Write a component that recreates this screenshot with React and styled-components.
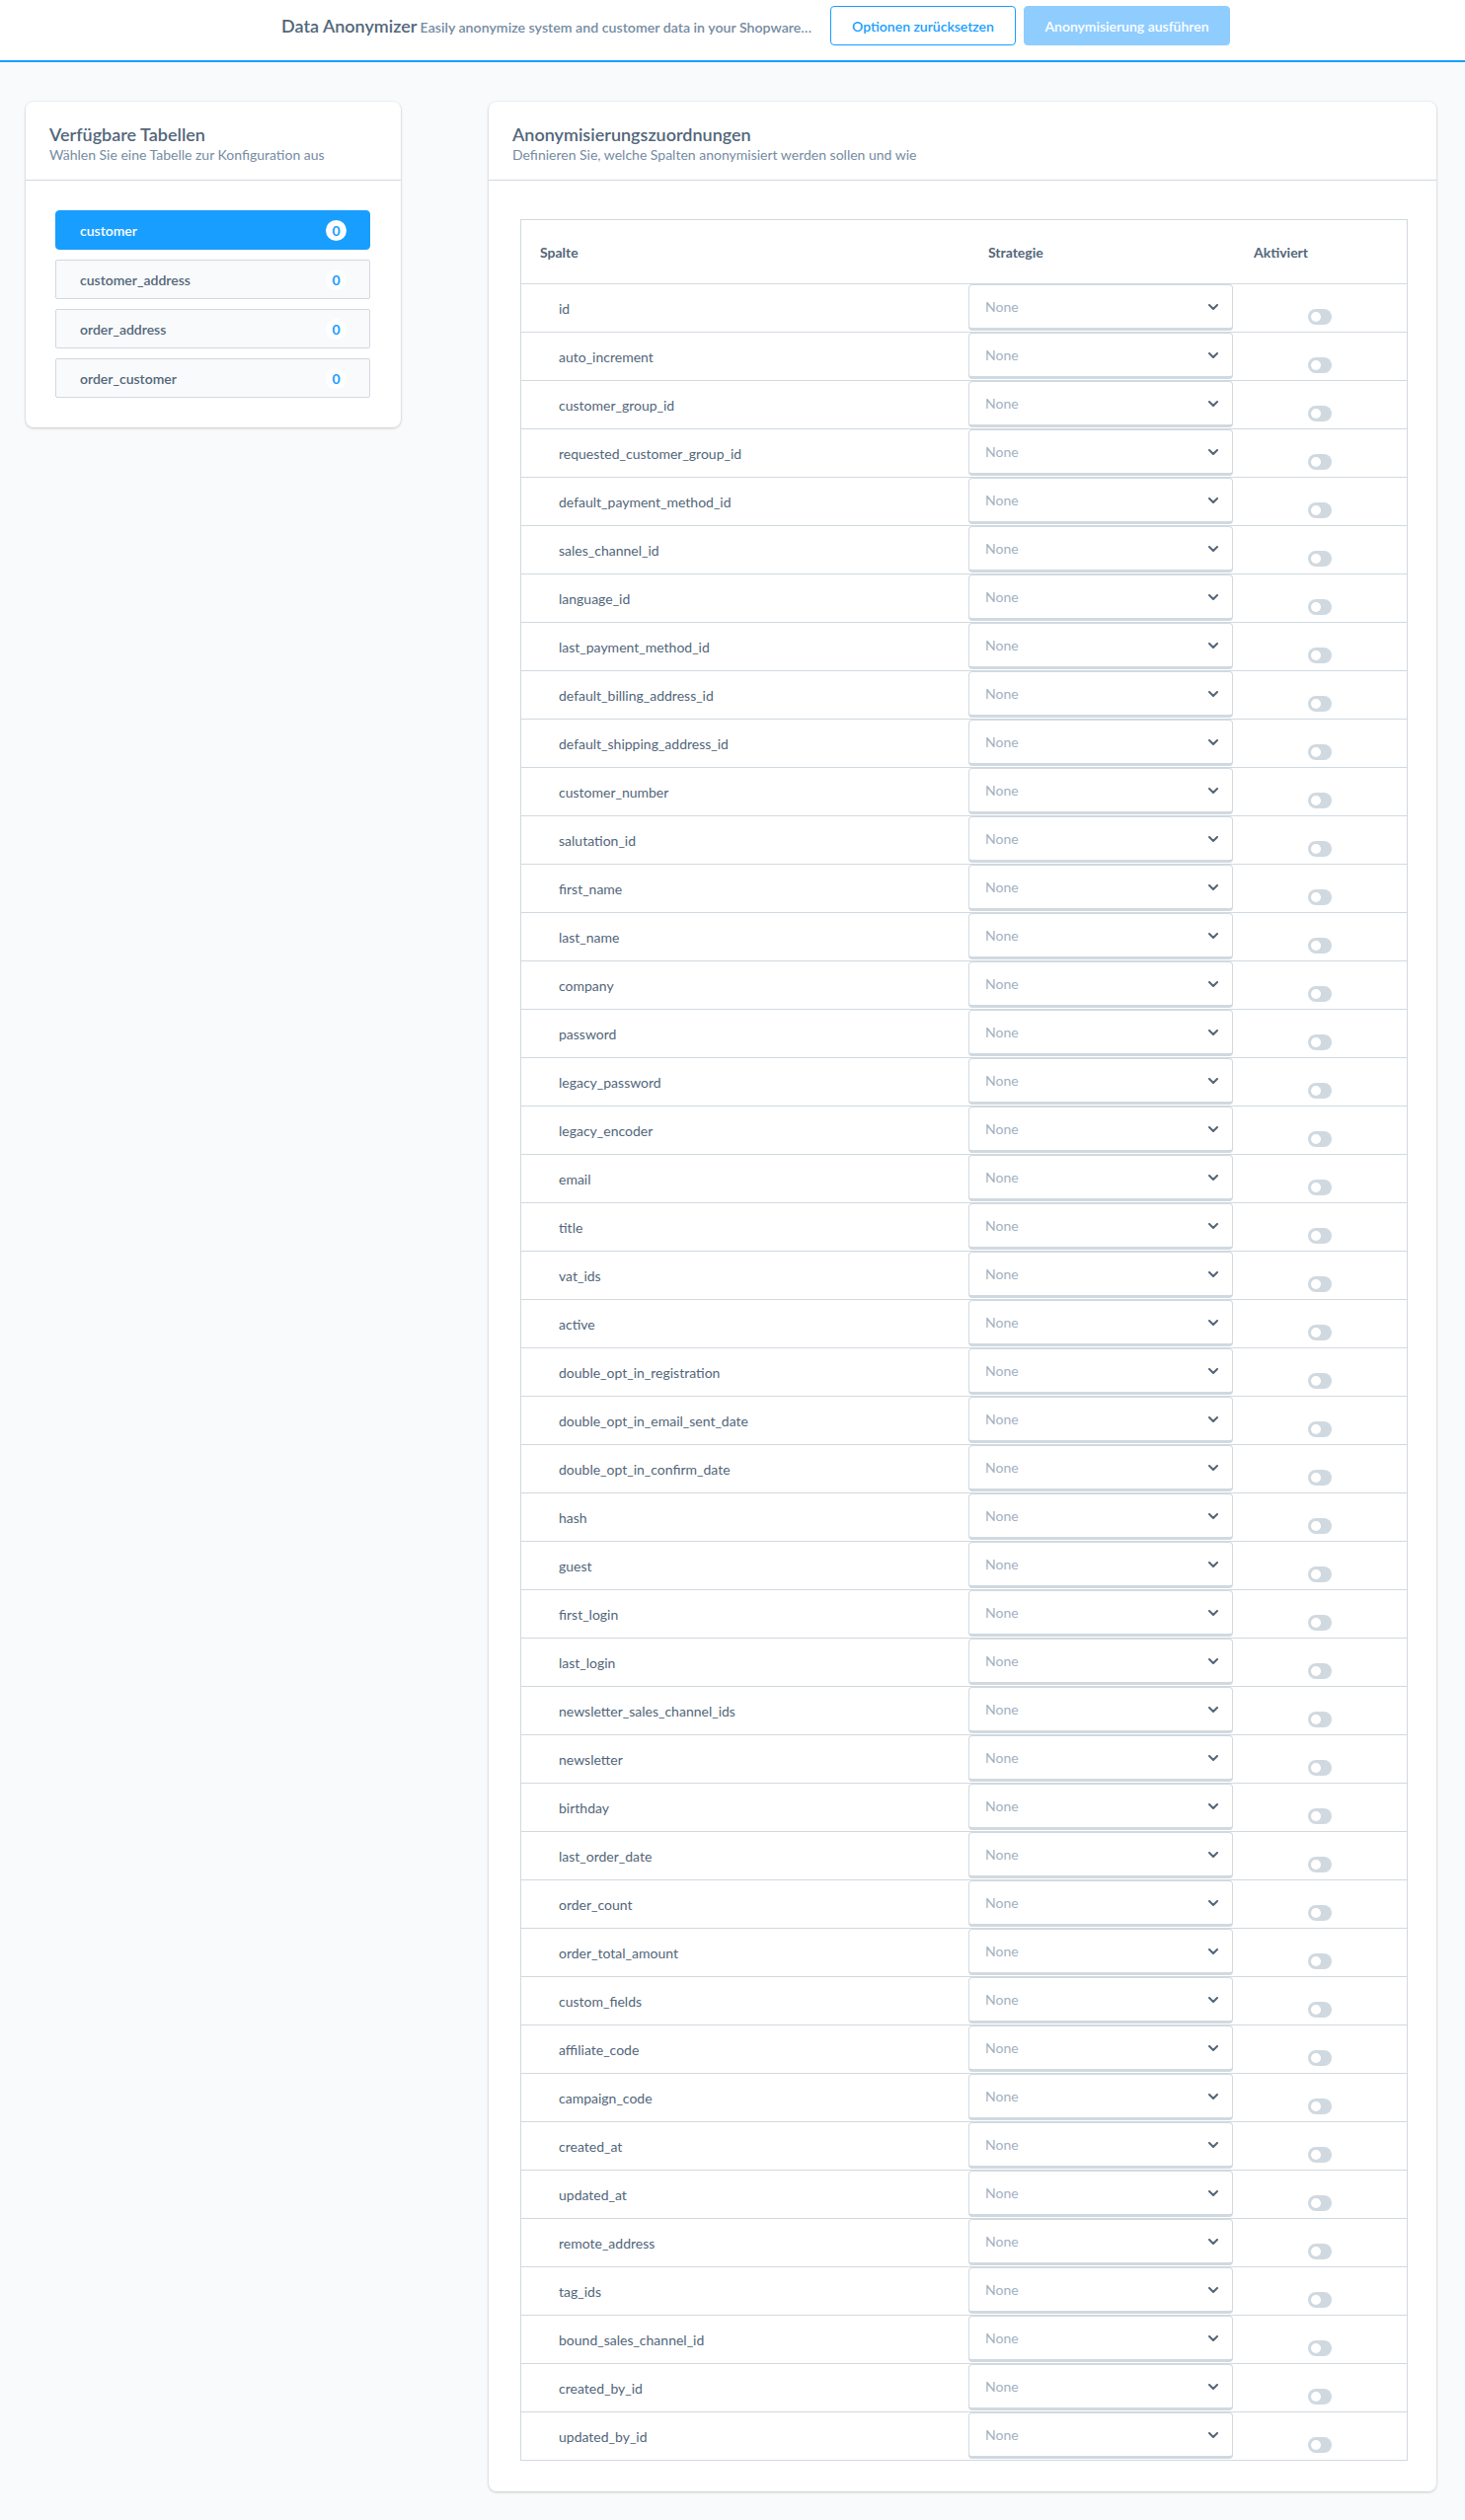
import React from "react";
import styled, { createGlobalStyle } from "styled-components";

const GlobalStyle = createGlobalStyle`
  * {
    box-sizing: border-box;
  }
  body {
    margin: 0;
    background-color: #f9fafb;
    font-family: "Source Sans Pro", Lato, "Noto Sans", sans-serif;
    color: #52667a;
  }
`;

const Page = styled.div`
  min-height: 2553px;
  background-color: #f9fafb;
`;

/* barra superior */
const HeaderBar = styled.header`
  display: flex;
  align-items: center;
  gap: 8px;
  padding: 6px 238px 15px 285px;
  background-color: #fff;
  border-bottom: 2px solid #189eff;
`;

const Heading = styled.div`
  flex: 1;
  min-width: 0;
  white-space: nowrap;
  overflow: hidden;
  text-overflow: ellipsis;
  color: #52667a;
`;

const HeadingTitle = styled.span`
  font-size: 18px;
  font-weight: 600;
`;

const HeadingSub = styled.span`
  font-size: 14.2px;
  font-weight: 600;
  color: #758ca3;
  margin-left: 3px;
`;

const Button = styled.button`
  height: 40px;
  width: ${(p) => p.$width}px;
  border-radius: 4px;
  font-family: inherit;
  font-size: 14px;
  font-weight: 600;
  cursor: pointer;
  border: 1px solid ${(p) => (p.$primary ? "#8fcdff" : "#189eff")};
  background-color: ${(p) => (p.$primary ? "#8fcdff" : "#fff")};
  color: ${(p) => (p.$primary ? "#fff" : "#189eff")};
`;

/* contenido */
const Main = styled.main`
  display: grid;
  grid-template-columns: 380px 960px;
  gap: 89px;
  align-items: start;
  padding: 40px 29px 31px 26px;
`;

const Card = styled.section`
  background-color: #fff;
  border-radius: 8px;
  box-shadow: 0 0 0 1px rgba(0, 0, 0, 0.03), 0 1px 3px rgba(0, 0, 0, 0.18);
`;

const CardHeader = styled.div`
  height: 80px;
  padding: 21px 24px 0;
  border-bottom: 1px solid #d1d9e0;
`;

const CardTitle = styled.h2`
  margin: 0;
  font-size: 18px;
  line-height: 24px;
  font-weight: 600;
  color: #52667a;
`;

const CardSubtitle = styled.p`
  margin: 0;
  font-size: 14px;
  line-height: 18px;
  color: #758ca3;
`;

const CardBody = styled.div`
  padding: ${(p) => p.$padding};
`;

const TableList = styled.div`
  display: flex;
  flex-direction: column;
  gap: 10px;
`;

const TableItem = styled.div`
  height: 40px;
  display: flex;
  align-items: center;
  justify-content: space-between;
  padding: 0 23px 0 24px;
  border: 1px solid ${(p) => (p.$active ? "#189eff" : "#d1d9e0")};
  border-radius: ${(p) => (p.$active ? "4px" : "2px")};
  background-color: ${(p) => (p.$active ? "#189eff" : "#f9fafb")};
  color: ${(p) => (p.$active ? "#fff" : "#52667a")};
  font-size: 14px;
  font-weight: 600;
  cursor: pointer;
`;

const Badge = styled.span`
  width: 21px;
  height: 21px;
  border-radius: 50%;
  background-color: #fff;
  color: #189eff;
  display: flex;
  align-items: center;
  justify-content: center;
  font-size: 14px;
  font-weight: 700;
`;

/* tabla de columnas */
const Grid = styled.div`
  border: 1px solid #d1d9e0;
`;

const Row = styled.div`
  display: grid;
  grid-template-columns: 453px 268px 1fr;
  height: ${(p) => (p.$head ? 65 : 49)}px;
  border-bottom: 1px solid #d1d9e0;

  &:last-child {
    border-bottom: none;
    height: 48px;
  }
`;

const HeadCell = styled.div`
  display: flex;
  align-items: center;
  padding-left: ${(p) => p.$pad}px;
  font-size: 14px;
  font-weight: 700;
  color: #52667a;
`;

const NameCell = styled.div`
  display: flex;
  align-items: center;
  padding-left: 38px;
  font-size: 14px;
  color: #52667a;
`;

const SelectBox = styled.div`
  height: 47px;
  display: flex;
  align-items: center;
  justify-content: space-between;
  padding: 0 14px 0 16px;
  border: 1px solid #d1d9e0;
  border-bottom-width: 3px;
  border-radius: 4px;
  background-color: #fff;
  color: #a3b1bf;
  font-size: 14px;
  cursor: pointer;
`;

const ToggleCell = styled.div`
  display: flex;
  justify-content: center;
  align-items: flex-start;
  padding-top: 25px;
`;

const Toggle = styled.span`
  position: relative;
  width: 24px;
  height: 16px;
  border-radius: 8px;
  background-color: #d1d9e0;

  &::after {
    content: "";
    position: absolute;
    left: 3px;
    top: 3px;
    width: 10px;
    height: 10px;
    border-radius: 50%;
    background-color: #fff;
  }
`;

const Chevron = () => (
  <svg width="10" height="6" viewBox="0 0 10 6" fill="none">
    <path d="M1 1l4 4 4-4" stroke="#52667a" strokeWidth="2" strokeLinecap="round" strokeLinejoin="round" />
  </svg>
);

const tablas = ["customer", "customer_address", "order_address", "order_customer"];

const columnas = [
  "id",
  "auto_increment",
  "customer_group_id",
  "requested_customer_group_id",
  "default_payment_method_id",
  "sales_channel_id",
  "language_id",
  "last_payment_method_id",
  "default_billing_address_id",
  "default_shipping_address_id",
  "customer_number",
  "salutation_id",
  "first_name",
  "last_name",
  "company",
  "password",
  "legacy_password",
  "legacy_encoder",
  "email",
  "title",
  "vat_ids",
  "active",
  "double_opt_in_registration",
  "double_opt_in_email_sent_date",
  "double_opt_in_confirm_date",
  "hash",
  "guest",
  "first_login",
  "last_login",
  "newsletter_sales_channel_ids",
  "newsletter",
  "birthday",
  "last_order_date",
  "order_count",
  "order_total_amount",
  "custom_fields",
  "affiliate_code",
  "campaign_code",
  "created_at",
  "updated_at",
  "remote_address",
  "tag_ids",
  "bound_sales_channel_id",
  "created_by_id",
  "updated_by_id",
];

const App = () => {
  return (
    <Page>
      <GlobalStyle />
      <HeaderBar>
        <Heading>
          <HeadingTitle>Data Anonymizer</HeadingTitle>
          <HeadingSub>Easily anonymize system and customer data in your Shopware…</HeadingSub>
        </Heading>
        <Button $width={188}>Optionen zurücksetzen</Button>
        <Button $primary $width={209}>Anonymisierung ausführen</Button>
      </HeaderBar>

      <Main>
        <Card>
          <CardHeader>
            <CardTitle>Verfügbare Tabellen</CardTitle>
            <CardSubtitle>Wählen Sie eine Tabelle zur Konfiguration aus</CardSubtitle>
          </CardHeader>
          <CardBody $padding="30px 31px 30px 30px">
            <TableList>
              {tablas.map((t, i) => (
                <TableItem key={t} $active={i === 0}>
                  {t}
                  <Badge>0</Badge>
                </TableItem>
              ))}
            </TableList>
          </CardBody>
        </Card>

        <Card>
          <CardHeader>
            <CardTitle>Anonymisierungszuordnungen</CardTitle>
            <CardSubtitle>Definieren Sie, welche Spalten anonymisiert werden sollen und wie</CardSubtitle>
          </CardHeader>
          <CardBody $padding="39px 29px 31px 32px">
            <Grid>
              <Row $head>
                <HeadCell $pad={19}>Spalte</HeadCell>
                <HeadCell $pad={20}>Strategie</HeadCell>
                <HeadCell $pad={21}>Aktiviert</HeadCell>
              </Row>
              {columnas.map((c) => (
                <Row key={c}>
                  <NameCell>{c}</NameCell>
                  <SelectBox>
                    None
                    <Chevron />
                  </SelectBox>
                  <ToggleCell>
                    <Toggle />
                  </ToggleCell>
                </Row>
              ))}
            </Grid>
          </CardBody>
        </Card>
      </Main>
    </Page>
  );
};

export default App;
